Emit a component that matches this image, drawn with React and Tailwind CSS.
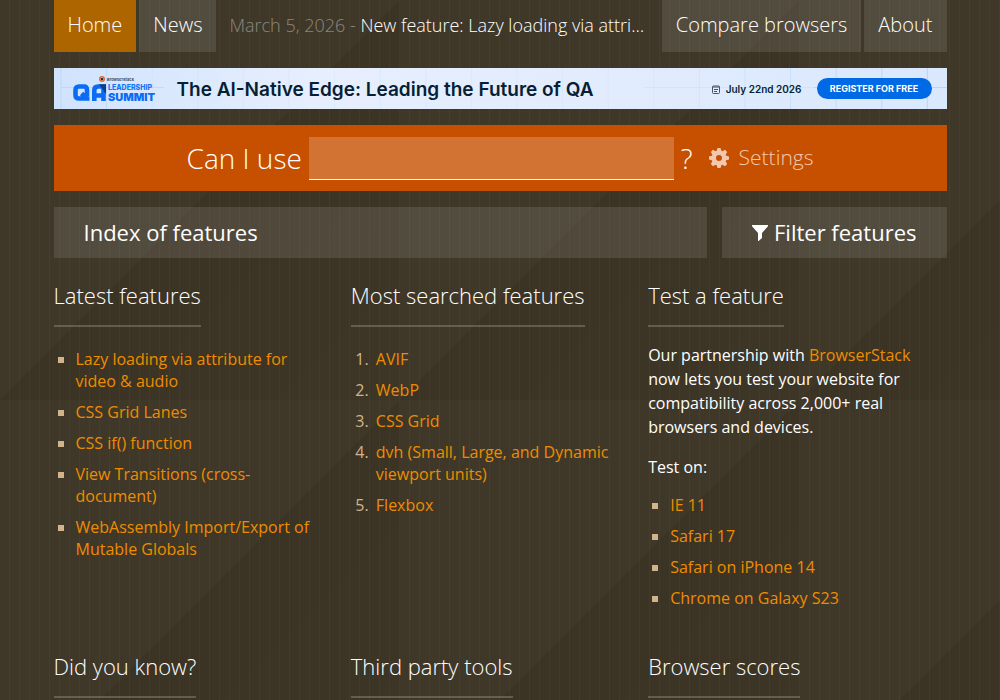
import { useState } from "react";

const latestFeatures = [
  "Lazy loading via attribute for video & audio",
  "CSS Grid Lanes",
  "CSS if() function",
  "View Transitions (cross-document)",
  "WebAssembly Import/Export of Mutable Globals"
];

const mostSearched = [
  "AVIF",
  "WebP",
  "CSS Grid",
  "dvh (Small, Large, and Dynamic viewport units)",
  "Flexbox"
];

const testTargets = [
  "IE 11",
  "Safari 17",
  "Safari on iPhone 14",
  "Chrome on Galaxy S23"
];

const teeth = [0, 45, 90, 135, 180, 225, 270, 315];

function GearIcon() {
  return (
    <svg viewBox="-10 -10 20 20" className="size-5 shrink-0" aria-hidden="true">
      <circle r="5.2" fill="none" stroke="currentColor" strokeWidth="4.4" />
      {teeth.map((angle) => (
        <path
          key={angle}
          d="M-2.6 -6.4 L-1.5 -10 L1.5 -10 L2.6 -6.4 Z"
          fill="currentColor"
          transform={`rotate(${angle})`}
        />
      ))}
    </svg>
  );
}

function FilterIcon() {
  return (
    <svg viewBox="0 0 16 16" className="size-4 shrink-0" aria-hidden="true">
      <path
        d="M0 0H16V1.2L10 8V13L6.6 16H6V8L0 1.2Z"
        fill="currentColor"
      />
    </svg>
  );
}

function CalendarIcon() {
  return (
    <svg viewBox="0 0 8 9" className="h-[9px] w-2 shrink-0" aria-hidden="true">
      <rect x="0.5" y="1" width="7" height="7.5" rx="1" fill="none" stroke="#4b5563" />
      <path d="M0.5 2H7.5M2 4.5H6M2 6.5H5" stroke="#4b5563" />
    </svg>
  );
}

function SummitLogo() {
  return (
    <svg
      viewBox="0 0 88 30"
      className="h-[30px] w-[88px] shrink-0"
      fontFamily="Inter, sans-serif"
      aria-label="BrowserStack QA Leadership Summit"
    >
      <circle cx="30" cy="5" r="2.2" fill="#fff" stroke="#e0653a" strokeWidth="1.6" />
      <circle cx="30" cy="5" r="1.2" fill="#17324d" />
      <text x="35" y="7" fontSize="4" fontWeight="600" fill="#333a45">
        BrowserStack
      </text>
      <g fill="none" stroke="#0a6cf5" strokeWidth="4.6">
        <path
          d="M15 22V16Q15 12.500 12 12.500H7Q3.500 12.500 3.500 16V21Q3.500 24.500 7 24.500H17.500M9.500 19.500L15 24.500"
          strokeLinejoin="round"
        />
        <path d="M22.300 27V16.500Q22.300 12.500 26 12.500H31.500V27M22.300 21.500H31" />
      </g>
      <path d="M27 10.200H34V20Z" fill="#0a3f86" />
      <text x="36" y="15.5" fontSize="7" fontWeight="800" fill="#1474f5">
        LEADERSHIP
      </text>
      <text x="36" y="27" fontSize="11" fontWeight="900" fill="#0a6cf5">
        SUMMIT
      </text>
    </svg>
  );
}

function BannerGrid() {
  const lines = Array.from({ length: 20 }, (_, i) => 7 + i * 45.6);
  return (
    <svg
      viewBox="0 0 893 41"
      preserveAspectRatio="none"
      className="absolute inset-0 size-full"
      aria-hidden="true"
    >
      <g stroke="#a9cdf8">
        {lines.map((x, i) => (
          <path
            key={x}
            d={`M${x} 0V41`}
            strokeOpacity={i < 2 ? 0.5 : i < 14 ? 0.15 : 0.1 + (i - 13) * 0.1}
          />
        ))}
        <path d="M7 19.500H110" strokeOpacity="0.5" />
        <path d="M590 19.500H760" strokeOpacity="0.2" />
        <path d="M760 19.500H893" strokeOpacity="0.7" />
      </g>
    </svg>
  );
}

function Banner() {
  return (
    <a
      href="#summit"
      className="relative mt-4 block h-[41px] overflow-hidden bg-linear-to-r from-[#d0e3fd] via-[#e7effe] via-30% to-[#dae8fd] font-['Inter',sans-serif] text-[#071f35]"
    >
      <BannerGrid />
      <span className="relative flex h-full items-center pr-[15px] pl-[18px]">
        <SummitLogo />
        <span className="ml-[17px] pt-[3px] text-[19px] font-semibold">
          The AI-Native Edge: Leading the Future of QA
        </span>
        <span className="ml-auto flex items-center gap-1.5 pt-0.5 text-[10px] font-semibold">
          <CalendarIcon />
          July 22nd 2026
        </span>
        <span className="ml-[15px] flex h-[21px] w-[115px] items-center justify-center rounded-full bg-[#0069e6] text-[9px] font-bold text-white">
          REGISTER FOR FREE
        </span>
      </span>
    </a>
  );
}

function Heading({ children }) {
  return (
    <h2 className="inline-block border-b-2 border-white/20 pb-4 align-top text-[22px] leading-[28px] font-light">
      {children}
    </h2>
  );
}

function SquareList({ items }) {
  return (
    <ul className="pl-1 leading-[22px]">
      {items.map((item) => (
        <li key={item} className="mb-[9px] flex gap-3">
          <span className="mt-[9px] size-1.5 shrink-0 bg-[#d2b48c]" />
          <a href="#feature" className="text-[#ee8c00] hover:underline">
            {item}
          </a>
        </li>
      ))}
    </ul>
  );
}

function NavLink({ active, children }) {
  return (
    <a
      href="#nav"
      className={`flex shrink-0 items-center px-3.5 pb-0.5 text-xl font-light ${
        active ? "bg-[#ad6500]" : "bg-white/10"
      }`}
    >
      {children}
    </a>
  );
}

export default function App() {
  const [query, setQuery] = useState("");

  return (
    <div className="h-screen overflow-hidden bg-[repeating-linear-gradient(90deg,transparent_0,transparent_9px,rgba(255,255,255,0.03)_9px,rgba(255,255,255,0.03)_10px),linear-gradient(135deg,#3f3829_0,#3f3829_50%,#3b3425_50%,#3d3627_100%)] bg-size-[400px_400px] font-['Open_Sans',sans-serif] text-base text-white">
      <div className="mx-auto w-[89.3%]">
        <nav className="flex h-[52px] gap-[3px]">
          <NavLink active>Home</NavLink>
          <NavLink>News</NavLink>
          <p className="flex min-w-0 flex-1 pr-3 pl-2.5 text-lg leading-[50px] font-light">
            <span className="shrink-0 whitespace-pre text-white/40">March 5, 2026 - </span>
            <a href="#news" className="min-w-0 truncate">
              New feature: Lazy loading via attribute
            </a>
          </p>
          <NavLink>Compare browsers</NavLink>
          <NavLink>About</NavLink>
        </nav>

        <Banner />

        <form
          className="mt-4 flex h-[66px] items-center justify-center bg-[#c75000] font-light"
          onSubmit={(e) => e.preventDefault()}
        >
          <label htmlFor="query" className="text-[28px]">
            Can I use
          </label>
          <input
            id="query"
            type="text"
            value={query}
            onChange={(e) => setQuery(e.target.value)}
            className="mx-[7px] h-[43px] w-[365px] border-b border-white bg-white/20 px-2 text-[28px] focus:outline-none"
          />
          <span className="text-[28px]">?</span>
          <button
            type="button"
            className="ml-4 flex items-center gap-2.5 text-[21px] text-[#f2c9ae]"
          >
            <GearIcon />
            Settings
          </button>
        </form>

        <div className="mt-4 flex gap-[15px] text-[22px]">
          <a href="#index" className="flex h-[51px] flex-1 items-center bg-white/10 px-[30px]">
            Index of features
          </a>
          <button
            type="button"
            className="flex h-[51px] items-center gap-1.5 bg-white/10 px-[30px]"
          >
            <FilterIcon />
            Filter features
          </button>
        </div>

        <main className="mt-[23px] grid grid-cols-3 pr-px">
          <section className="h-[371px] pr-[30px]">
            <Heading>Latest features</Heading>
            <div className="mt-[21px]">
              <SquareList items={latestFeatures} />
            </div>
          </section>

          <section className="pr-[30px]">
            <Heading>Most searched features</Heading>
            <ol className="mt-[21px] list-decimal pl-[22px] leading-[22px]">
              {mostSearched.map((item) => (
                <li key={item} className="mb-[9px] pl-[3px] marker:text-[#d2b48c]">
                  <a href="#feature" className="text-[#ee8c00] hover:underline">
                    {item}
                  </a>
                </li>
              ))}
            </ol>
          </section>

          <section className="pr-[30px]">
            <Heading>Test a feature</Heading>
            <p className="mt-4">
              Our partnership with{" "}
              <a href="#browserstack" className="text-[#ee8c00] hover:underline">
                BrowserStack
              </a>{" "}
              now lets you test your website for compatibility across 2,000+ real
              browsers and devices.
            </p>
            <p className="mt-4 mb-[15px]">Test on:</p>
            <SquareList items={testTargets} />
          </section>

          <section>
            <Heading>Did you know?</Heading>
          </section>
          <section>
            <Heading>Third party tools</Heading>
          </section>
          <section>
            <Heading>Browser scores</Heading>
          </section>
        </main>
      </div>
    </div>
  );
}
